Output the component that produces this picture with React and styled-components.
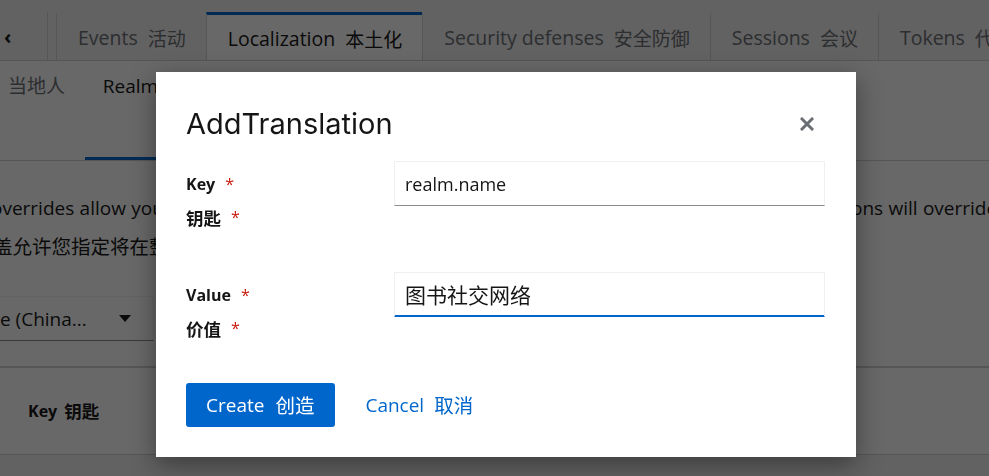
import React from 'react';
import styled, { createGlobalStyle } from 'styled-components';

const GlobalStyle = createGlobalStyle`
  html, body {
    margin: 0;
    padding: 0;
    width: 989px;
    height: 476px;
    overflow: hidden;
    background: #f0f0f0;
    font-family: "Open Sans", "Noto Sans CJK SC", sans-serif;
    color: #151515;
  }
`;

const Zh = styled.span`
  font-family: "Noto Sans CJK SC", sans-serif;
  font-size: ${p => p.$size || 19}px;
  line-height: 1;
`;

const Page = styled.div`
  display: flex;
  flex-direction: column;
  width: 989px;
  height: 476px;
  padding-top: 12px;
  box-sizing: border-box;
`;

const TabBar = styled.div`
  display: flex;
  height: 49px;
  background: #f0f0f0;
  border-bottom: 1px solid #d2d2d2;
  box-sizing: border-box;
  overflow: hidden;
`;

const ScrollButton = styled.div`
  flex-shrink: 0;
  width: 48px;
  display: flex;
  align-items: center;
  padding-left: 4px;
  box-sizing: border-box;
  border-right: 1px solid #d2d2d2;
  margin-right: 8px;
  font-size: 20px;
  font-weight: 700;
`;

const Tab = styled.div`
  flex-shrink: 0;
  display: flex;
  align-items: center;
  padding: 0 20px 0 21px;
  font-size: 19.5px;
  white-space: nowrap;
  color: ${p => (p.$active ? '#151515' : '#6a6e73')};
  background: ${p => (p.$active ? '#fff' : 'transparent')};
  border-left: 1px solid #d2d2d2;
  border-top: 3px solid ${p => (p.$active ? '#06c' : 'transparent')};
  margin-bottom: ${p => (p.$active ? '-1px' : '0')};
  box-sizing: border-box;
  gap: 10px;
`;

const Content = styled.div`
  flex: 1;
  background: #fff;
  display: flex;
  flex-direction: column;
  overflow: hidden;
`;

const SubTabs = styled.div`
  display: flex;
  height: 100px;
  border-bottom: 1px solid #d2d2d2;
  box-sizing: border-box;
`;

const SubTab = styled.div`
  padding: 12px 8px 0;
  font-size: 19px;
  white-space: nowrap;
  color: ${p => (p.$active ? '#151515' : '#6a6e73')};
  width: ${p => p.$width}px;
  box-sizing: border-box;
  border-bottom: 3px solid ${p => (p.$active ? '#06c' : 'transparent')};
`;

const Intro = styled.div`
  padding-top: 28px;
  font-size: 19px;
  line-height: 39px;
  white-space: nowrap;
  color: #151515;
`;

const IntroLine = styled.div`
  margin-left: ${p => p.$shift || 0}px;
  word-spacing: ${p => p.$spread || 0}px;
`;

const SelectBox = styled.div`
  margin-top: 29px;
  width: 154px;
  height: 45px;
  border: 1px solid #f0f0f0;
  border-bottom-color: #8a8d90;
  border-left: none;
  display: flex;
  align-items: center;
  justify-content: space-between;
  padding-right: 22px;
  box-sizing: border-box;
  font-size: 19px;
`;

const Caret = styled.span`
  width: 0;
  height: 0;
  border-left: 6px solid transparent;
  border-right: 6px solid transparent;
  border-top: 7px solid #151515;
`;

const TableHead = styled.div`
  margin-top: 25px;
  border-top: 2px solid #d2d2d2;
  border-bottom: 1px solid #d2d2d2;
  height: 89px;
  display: flex;
  align-items: center;
  padding-left: 28px;
  font-size: 16px;
  font-weight: 700;
  gap: 7px;
  box-sizing: border-box;
`;

const Bottom = styled.div`
  flex: 1;
  background: #f0f0f0;
`;

const Backdrop = styled.div`
  position: fixed;
  inset: 0;
  background: rgba(3, 3, 3, 0.6);
  padding: 72px 0 0 156px;
  box-sizing: border-box;
`;

const Modal = styled.div`
  width: 700px;
  height: 385px;
  background: #fff;
  box-shadow: 0 8px 24px rgba(3, 3, 3, 0.4);
  padding: 30px 30px 0;
  box-sizing: border-box;
  display: flex;
  flex-direction: column;
`;

const Header = styled.div`
  display: flex;
  justify-content: space-between;
  align-items: center;
  height: 42px;
`;

const Title = styled.h1`
  margin: 0;
  font-family: "Inter", "Open Sans", sans-serif;
  font-size: 29px;
  font-weight: 400;
  color: #151515;
`;

const CloseBtn = styled.button`
  border: none;
  background: none;
  padding: 0;
  margin-right: 12px;
  margin-top: 2px;
  display: flex;
  cursor: pointer;
`;

const Form = styled.div`
  margin-top: 17px;
  display: flex;
  flex-direction: column;
  gap: 43px;
`;

const Row = styled.div`
  display: grid;
  grid-template-columns: 208px 431px;
  align-items: start;
`;

const Label = styled.div`
  display: flex;
  flex-direction: column;
  padding-top: 12px;
  gap: 10px;
`;

const LabelLine = styled.div`
  font-size: 16px;
  font-weight: 700;
  line-height: 23px;
  color: #151515;
  display: flex;
  align-items: center;
  gap: 10px;
`;

const Req = styled.span`
  color: #c9190b;
  font-weight: 400;
`;

const Input = styled.div`
  height: 45px;
  border: 1px solid #f0f0f0;
  border-bottom: 1px solid ${p => (p.$focus ? '#06c' : '#8a8d90')};
  ${p => p.$focus && 'box-shadow: inset 0 -1px 0 #06c;'}
  display: flex;
  align-items: center;
  padding: 0 10px;
  font-size: 18px;
  color: #151515;
  box-sizing: border-box;
`;

const Actions = styled.div`
  margin-top: 43px;
  display: flex;
  align-items: center;
  gap: 8px;
`;

const PrimaryButton = styled.button`
  background: #06c;
  color: #fff;
  border: none;
  border-radius: 3px;
  height: 44px;
  padding: 0 21px 0 20px;
  font-family: inherit;
  font-size: 19px;
  display: flex;
  gap: 11px;
  align-items: center;
`;

const LinkButton = styled.button`
  background: none;
  color: #06c;
  border: none;
  height: 44px;
  padding: 0 22px;
  font-family: inherit;
  font-size: 19px;
  display: flex;
  gap: 10px;
  align-items: center;
`;

const FieldRow = ({ en, zh, value, focus }) => (
  <Row>
    <Label>
      <LabelLine>{en}<Req>*</Req></LabelLine>
      <LabelLine><Zh $size={17.5}>{zh}</Zh><Req>*</Req></LabelLine>
    </Label>
    <Input $focus={focus}>{value}</Input>
  </Row>
);

const App = () => {
  return (
    <>
      <GlobalStyle />
      <Page>
        <TabBar>
          <ScrollButton>‹</ScrollButton>
          <Tab>Events<Zh>活动</Zh></Tab>
          <Tab $active>Localization<Zh>本土化</Zh></Tab>
          <Tab>Security defenses<Zh>安全防御</Zh></Tab>
          <Tab>Sessions<Zh>会议</Zh></Tab>
          <Tab>Tokens<Zh>代币</Zh></Tab>
        </TabBar>
        <Content>
          <SubTabs>
            <SubTab $width={85}><Zh>当地人</Zh></SubTab>
            <SubTab $active $width={200}>&nbsp;&nbsp;Realm overrides</SubTab>
          </SubTabs>
          <Intro>
            <IntroLine $shift={-9} $spread={0.4}>overrides allow you to specify translations which are then used for the entire realm. The translations will override the defaults</IntroLine>
            <IntroLine $shift={-7}><Zh $size={19.5}>盖允许您指定将在整个领域中使用的翻译</Zh></IntroLine>
          </Intro>
          <SelectBox>
            <span>e (China...</span>
            <Caret />
          </SelectBox>
          <TableHead>Key<Zh $size={17.5}>钥匙</Zh></TableHead>
          <Bottom />
        </Content>
      </Page>
      <Backdrop>
        <Modal>
          <Header>
            <Title>AddTranslation</Title>
            <CloseBtn aria-label="Close">
              <svg width="14" height="14" viewBox="0 0 14 14">
                <path d="M2 2 L12 12 M12 2 L2 12" stroke="#6a6e73" strokeWidth="3" strokeLinecap="square" />
              </svg>
            </CloseBtn>
          </Header>
          <Form>
            <FieldRow en="Key" zh="钥匙" value="realm.name" />
            <FieldRow en="Value" zh="价值" value={<Zh $size={21}>图书社交网络</Zh>} focus />
          </Form>
          <Actions>
            <PrimaryButton>Create<Zh $size={19.5}>创造</Zh></PrimaryButton>
            <LinkButton>Cancel<Zh $size={19.5}>取消</Zh></LinkButton>
          </Actions>
        </Modal>
      </Backdrop>
    </>
  );
};

export default App;
